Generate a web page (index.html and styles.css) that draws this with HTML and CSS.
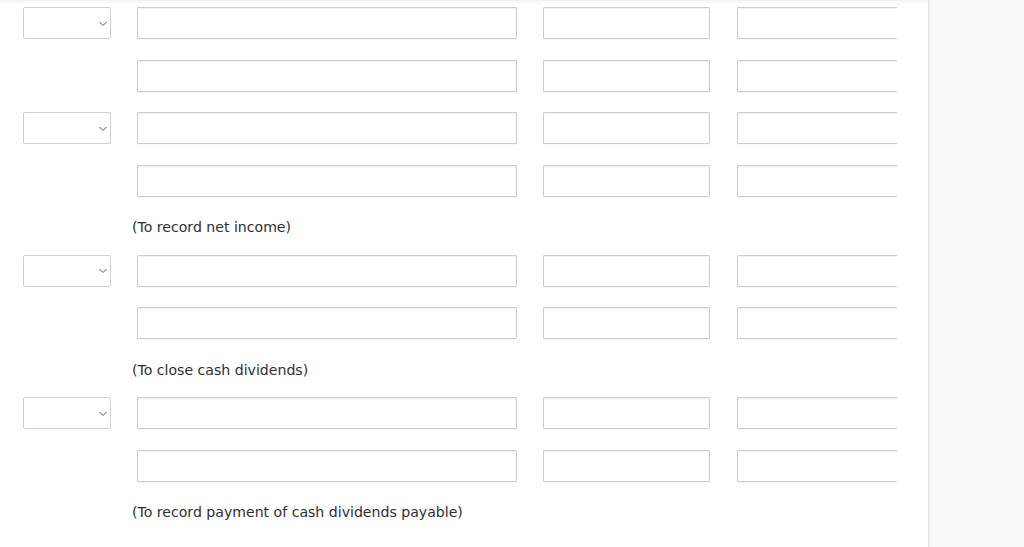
FILE: index.html
```html
<!DOCTYPE html>
<html lang="en">
<head>
<meta charset="utf-8">
<title>Journal entries</title>
<link rel="stylesheet" href="styles.css">
</head>
<body>
<div class="page">
  <main class="main">
    <div class="entries">
      <div class="row">
        <div class="acct"><svg class="chev" width="8" height="6" viewBox="0 0 8 6"><polyline points="0.5,1 4,4.5 7.5,1" fill="none" stroke="#555" stroke-width="1"/></svg></div>
        <input class="desc" type="text">
        <input class="num" type="text">
        <div class="clip"><input class="num last" type="text"></div>
      </div>
      <div class="row">
        <div class="spacer"></div>
        <input class="desc" type="text">
        <input class="num" type="text">
        <div class="clip"><input class="num last" type="text"></div>
      </div>
      <div class="row">
        <div class="acct"><svg class="chev" width="8" height="6" viewBox="0 0 8 6"><polyline points="0.5,1 4,4.5 7.5,1" fill="none" stroke="#555" stroke-width="1"/></svg></div>
        <input class="desc" type="text">
        <input class="num" type="text">
        <div class="clip"><input class="num last" type="text"></div>
      </div>
      <div class="row">
        <div class="spacer"></div>
        <input class="desc" type="text">
        <input class="num" type="text">
        <div class="clip"><input class="num last" type="text"></div>
      </div>
      <div class="memo">(To record net income)</div>

      <div class="row">
        <div class="acct"><svg class="chev" width="8" height="6" viewBox="0 0 8 6"><polyline points="0.5,1 4,4.5 7.5,1" fill="none" stroke="#555" stroke-width="1"/></svg></div>
        <input class="desc" type="text">
        <input class="num" type="text">
        <div class="clip"><input class="num last" type="text"></div>
      </div>
      <div class="row">
        <div class="spacer"></div>
        <input class="desc" type="text">
        <input class="num" type="text">
        <div class="clip"><input class="num last" type="text"></div>
      </div>
      <div class="memo">(To close cash dividends)</div>

      <div class="row">
        <div class="acct"><svg class="chev" width="8" height="6" viewBox="0 0 8 6"><polyline points="0.5,1 4,4.5 7.5,1" fill="none" stroke="#555" stroke-width="1"/></svg></div>
        <input class="desc" type="text">
        <input class="num" type="text">
        <div class="clip"><input class="num last" type="text"></div>
      </div>
      <div class="row">
        <div class="spacer"></div>
        <input class="desc" type="text">
        <input class="num" type="text">
        <div class="clip"><input class="num last" type="text"></div>
      </div>
      <div class="memo">(To record payment of cash dividends payable)</div>
    </div>
  </main>
  <aside class="side"></aside>
</div>
</body>
</html>
```

FILE: styles.css
```css
html, body {
  margin: 0;
  padding: 0;
  height: 100%;
  background: #ffffff;
  font-family: "DejaVu Sans", Verdana, sans-serif;
  color: #333333;
  overflow: hidden;
}

.page {
  display: flex;
  height: 547px;
  width: 1024px;
}

.main {
  width: 928px;
  flex: none;
  background: linear-gradient(to bottom, rgba(0,0,0,0.06) 0px, rgba(0,0,0,0.02) 2px, rgba(0,0,0,0) 5px) no-repeat top / 100% 6px, #ffffff;
}

.side {
  flex: 1;
  background: #f9f9f9;
  border-left: 1px solid #e4e4e4;
  box-shadow: inset 1px 0 0 #f0f0f0;
}

.entries {
  display: flex;
  flex-direction: column;
  gap: 20.5px;
  padding: 7px 0 0 23px;
}

.row {
  display: flex;
  gap: 26px;
  height: 32px;
}

.acct, .spacer {
  width: 88px;
  flex: none;
  box-sizing: border-box;
}

.acct {
  border: 1px solid #cfcfcf;
  border-radius: 2px;
  background: #fff;
  display: flex;
  align-items: center;
  justify-content: flex-end;
  padding-right: 3px;
}

.chev {
  display: block;
  margin-top: 1px;
}

input {
  box-sizing: border-box;
  height: 32px;
  margin: 0;
  padding: 0 6px;
  border: 1px solid #cccccc;
  border-radius: 1px;
  background: #fff;
  box-shadow: inset 0 1px 1px rgba(0,0,0,0.06), 0 1px 0 rgba(0,0,0,0.03);
  font: 14px "DejaVu Sans", Verdana, sans-serif;
  outline: none;
}

.desc {
  width: 380px;
  flex: none;
}

.num {
  width: 167px;
  flex: none;
}

.clip {
  width: 160px;
  margin-left: 1px;
  flex: none;
  overflow: hidden;
  height: 33px;
}

.num.last {
  width: 180px;
}

.memo {
  height: 17px;
  line-height: 20px;
  font-size: 14.1px;
  padding-left: 109px;
  color: #2e2e2e;
  white-space: nowrap;
}
```
